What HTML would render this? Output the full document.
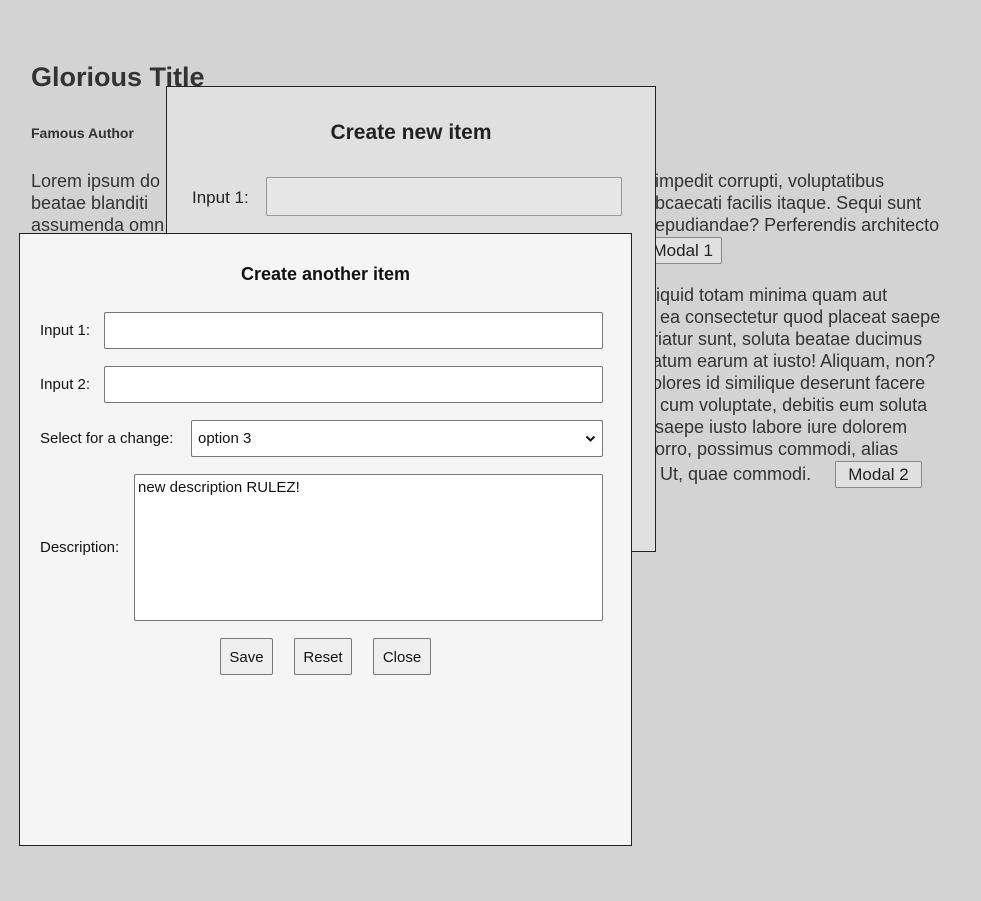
<!DOCTYPE html>
<html><head><style>
body{margin:0;width:981px;height:901px;background:#d3d3d3;font-family:"Liberation Sans",sans-serif;color:#333;position:relative;overflow:hidden}
.a{position:absolute;white-space:nowrap}
.t{font-size:18px;line-height:22px}
.btn{position:absolute;background:#e0e0e0;border:1px solid #888;border-radius:2px;font-size:17px;text-align:center;box-sizing:border-box;color:#222}
.m{position:absolute;border:1px solid #222;box-sizing:border-box}
.inp{position:absolute;background:#fff;border:1px solid #777;border-radius:2px;box-sizing:border-box}
.lab{position:absolute;font-size:15px;color:#111;white-space:nowrap}
.b2{position:absolute;background:#efefef;border:1px solid #777;border-radius:2px;font-size:15px;text-align:center;line-height:37px;box-sizing:border-box;color:#111}
</style></head><body>
<div class="a" style="left:31px;top:62px;font-size:27px;font-weight:bold">Glorious Title</div>
<div class="a" style="left:31px;top:125px;font-size:14px;font-weight:bold">Famous Author</div>
<div class="a t" style="left:31px;top:170px">Lorem ipsum do</div>
<div class="a t" style="left:31px;top:192px">beatae blanditi</div>
<div class="a t" style="left:31px;top:214px">assumenda omn</div>
<div class="a t" style="left:655px;top:170px">impedit corrupti, voluptatibus</div>
<div class="a t" style="left:655px;top:192px">bcaecati facilis itaque. Sequi sunt</div>
<div class="a t" style="left:655px;top:214px">epudiandae? Perferendis architecto</div>
<div class="btn" style="left:630px;top:237px;width:92px;height:27px;line-height:25px;text-align:right;padding-right:8px">Modal 1</div>
<div class="a t" style="left:652px;top:284px">liquid totam minima quam aut</div>
<div class="a t" style="left:660px;top:306px">ea consectetur quod placeat saepe</div>
<div class="a t" style="left:652px;top:328px">riatur sunt, soluta beatae ducimus</div>
<div class="a t" style="left:652px;top:350px">atum earum at iusto! Aliquam, non?</div>
<div class="a t" style="left:652px;top:372px">olores id similique deserunt facere</div>
<div class="a t" style="left:660px;top:394px">cum voluptate, debitis eum soluta</div>
<div class="a t" style="left:655px;top:416px">saepe iusto labore iure dolorem</div>
<div class="a t" style="left:655px;top:438px">orro, possimus commodi, alias</div>
<div class="a t" style="left:660px;top:463px">Ut, quae commodi.</div>
<div class="btn" style="left:835px;top:461px;width:87px;height:27px;line-height:25px">Modal 2</div>

<div class="m" style="left:166px;top:86px;width:490px;height:466px;background:#e0e0e0">
<div class="a" style="left:0;width:488px;text-align:center;top:34px;font-size:21px;font-weight:bold;color:#222">Create new item</div>
<div class="lab" style="left:25px;top:101px;font-size:17px;color:#222">Input 1:</div>
<div class="inp" style="left:99px;top:90px;width:356px;height:39px;background:#e6e6e6;border-color:#999"></div>
</div>

<div class="m" style="left:19px;top:233px;width:613px;height:613px;background:#f5f5f5">
<div class="a" style="left:0;width:611px;text-align:center;top:30px;font-size:18px;font-weight:bold;color:#111">Create another item</div>
<div class="lab" style="left:20px;top:88px">Input 1:</div>
<div class="inp" style="left:84px;top:78px;width:499px;height:37px"></div>
<div class="lab" style="left:20px;top:142px">Input 2:</div>
<div class="inp" style="left:84px;top:132px;width:499px;height:37px"></div>
<div class="lab" style="left:20px;top:196px">Select for a change:</div>
<div class="inp" style="left:171px;top:186px;width:412px;height:37px"><span style="position:absolute;left:6px;top:9px;font-size:15px;color:#111">option 3</span><svg style="position:absolute;right:6px;top:13px" width="11" height="9" viewBox="0 0 11 9"><path d="M1.5 2.5L5.5 6.5L9.5 2.5" stroke="#111" stroke-width="2" fill="none"/></svg></div>
<div class="lab" style="left:20px;top:305px">Description:</div>
<div class="inp" style="left:114px;top:240px;width:469px;height:147px"><span style="position:absolute;left:3px;top:4px;font-size:15px;color:#111">new description RULEZ!</span></div>
<div class="b2" style="left:200px;top:404px;width:53px;height:37px">Save</div>
<div class="b2" style="left:274px;top:404px;width:58px;height:37px">Reset</div>
<div class="b2" style="left:353px;top:404px;width:58px;height:37px">Close</div>
</div>
</body></html>
